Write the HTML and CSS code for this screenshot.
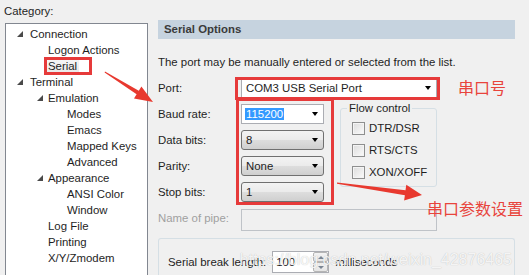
FILE: index.html
```html
<!DOCTYPE html>
<html lang="en">
<head>
  <meta charset="UTF-8" />
  <title>Session Options - Serial</title>
  <link rel="stylesheet" href="styles.css">
</head>
<body>
  <div class="window">
    <div class="sidebar">
      <div class="caption">Category:</div>
      <ul class="tree">
        <li class="lvl0"><span class="tw"><svg width="6" height="6" viewBox="0 0 6 6"><polygon points="6,0 6,6 0,6" /></svg></span>Connection</li>
        <li class="lvl1"><span class="tw"></span>Logon Actions</li>
        <li class="lvl1"><span class="tw"></span><span class="selected">Serial</span></li>
        <li class="lvl0"><span class="tw"><svg width="6" height="6" viewBox="0 0 6 6"><polygon points="6,0 6,6 0,6" /></svg></span>Terminal</li>
        <li class="lvl1"><span class="tw"><svg width="6" height="6" viewBox="0 0 6 6"><polygon points="6,0 6,6 0,6" /></svg></span>Emulation</li>
        <li class="lvl2">Modes</li>
        <li class="lvl2">Emacs</li>
        <li class="lvl2">Mapped Keys</li>
        <li class="lvl2">Advanced</li>
        <li class="lvl1"><span class="tw"><svg width="6" height="6" viewBox="0 0 6 6"><polygon points="6,0 6,6 0,6" /></svg></span>Appearance</li>
        <li class="lvl2">ANSI Color</li>
        <li class="lvl2">Window</li>
        <li class="lvl1"><span class="tw"></span>Log File</li>
        <li class="lvl1"><span class="tw"></span>Printing</li>
        <li class="lvl1"><span class="tw"></span>X/Y/Zmodem</li>
      </ul>
    </div>

    <div class="panel">
      <div class="panel-title">Serial Options</div>
      <p class="hint">The port may be manually entered or selected from the list.</p>

      <div class="form">
        <div class="label">Port:</div>
        <div class="combo edit wide"><span>COM3 USB Serial Port</span><span class="arrow"></span></div>

        <div class="label">Baud rate:</div>
        <div class="combo edit"><span class="hl">115200</span><span class="arrow"></span></div>

        <div class="group flow">
          <span class="legend">Flow control</span>
          <div class="check"><span class="box"></span>DTR/DSR</div>
          <div class="check"><span class="box"></span>RTS/CTS</div>
          <div class="check"><span class="box"></span>XON/XOFF</div>
        </div>

        <div class="label">Data bits:</div>
        <div class="combo"><span>8</span><span class="arrow"></span></div>

        <div class="label">Parity:</div>
        <div class="combo"><span>None</span><span class="arrow"></span></div>

        <div class="label">Stop bits:</div>
        <div class="combo"><span>1</span><span class="arrow"></span></div>

        <div class="label disabled">Name of pipe:</div>
        <div class="textbox disabled wide"></div>
      </div>

      <div class="group break">
        <div class="label">Serial break length:</div>
        <div class="spin">
          <span class="spin-value">100</span>
          <span class="spin-btns">
            <span class="spin-btn"><span class="up"></span></span>
            <span class="spin-btn"><span class="down"></span></span>
          </span>
        </div>
        <div class="label">milliseconds</div>
      </div>
    </div>

    <!-- annotations drawn on top of the dialog -->
    <div class="mark mark-serial"></div>
    <div class="mark mark-port"></div>
    <div class="mark mark-params"></div>
    <svg class="arrows" width="529" height="275" viewBox="0 0 529 275">
      <polygon points="105,71.5 138.8,90.8 141.4,86.6 153,102 134,98.4 136.6,94.2 104.6,72.5" />
      <polygon points="337,182.5 405.5,190.2 406.3,184.8 422,195 404.1,200.6 404.9,195.2 337,183.8" />
    </svg>
    <div class="note note-port">串口号</div>
    <div class="note note-params">串口参数设置</div>
    <div class="watermark">https://blog.csdn.net/weixin_42876465</div>
  </div>
</body>
</html>
```

FILE: styles.css
```css
html, body {
  margin: 0;
  height: 275px;
  overflow: hidden;
}
body {
  background: #f0f0f0;
  font-family: 'Liberation Sans', Arial, sans-serif;
  font-size: 11.4px;
  color: #1e1e1e;
}

.window {
  position: relative;
  display: flex;
  height: 275px;
  overflow: hidden;
}

/* left column */
.sidebar {
  width: 148px;
  flex: none;
}
.caption {
  padding: 5px 0 0 4px;
  height: 18px;
  line-height: 13px;
}
.tree {
  list-style: none;
  margin: 0 0 0 5px;
  padding: 2px 0 0 0;
  height: 250px;
  background: #fff;
  border: 1px solid #828790;
  border-bottom: none;
}
.tree li {
  display: flex;
  align-items: center;
  height: 16px;
  white-space: nowrap;
}
.tree .lvl0 { padding-left: 6px; }
.tree .lvl1 { padding-left: 24px; }
.tree .lvl2 { padding-left: 61px; }
.tw {
  width: 18px;
  flex: none;
  display: flex;
  align-items: center;
  padding-left: 5px;
  box-sizing: border-box;
}
.lvl1 .tw { padding-left: 7px; }
.tw svg { fill: #4a4a4a; }
.selected {
  background: linear-gradient(#f6f6f6, #e8e8e8);
  margin-left: -2px;
  padding: 1px 2px;
  line-height: 13px;
}

/* right column */
.panel {
  margin-left: 10px;
  width: 357px;
  padding-top: 20px;
}
.panel-title {
  height: 19px;
  line-height: 19px;
  background: #c6d3df;
  padding-left: 6px;
  font-weight: bold;
  color: #3a3a3a;
}
.hint {
  margin: 15px 0 0 0;
  line-height: 16px;
}

.form {
  display: grid;
  grid-template-columns: 83px 83px 1fr;
  grid-auto-rows: 20px;
  row-gap: 6px;
  margin-top: 8px;
  width: 279px;
}
.label {
  display: flex;
  align-items: center;
  white-space: nowrap;
}
.form .label { grid-column: 1; }
.label.disabled { color: #a0a0a0; }

.combo {
  display: flex;
  align-items: center;
  padding-left: 4px;
  border: 1px solid #707070;
  border-radius: 3px;
  background: linear-gradient(#f3f3f3 0%, #ebebeb 48%, #dddddd 52%, #cfcfcf 100%);
}
.combo.edit {
  background: #fff;
  border-color: #abadb3;
  border-radius: 0;
}
.form .combo, .form .textbox { grid-column: 2; }
.form .wide { grid-column: 2 / span 2; }
.arrow {
  margin-left: auto;
  margin-right: 5px;
  border-top: 4px solid #000;
  border-left: 3.5px solid transparent;
  border-right: 3.5px solid transparent;
}
.hl {
  background: #3399ff;
  color: #fff;
  padding: 0 1px;
  margin-left: -1px;
}
.textbox {
  border: 1px solid #bfc3c8;
  height: 20px;
  margin-top: 1px;
}

.group {
  position: relative;
  border: 1px solid #d5dfe5;
  border-radius: 3px;
}
.legend {
  position: absolute;
  top: -8px;
  left: 6px;
  padding: 0 2px;
  background: #f0f0f0;
  line-height: 14px;
}
.flow {
  grid-column: 3;
  grid-row: 2 / span 3;
  align-self: start;
  margin: 4px 0 0 16px;
  padding: 8px 0 3px 11px;
}
.check {
  display: flex;
  align-items: center;
  gap: 4px;
  height: 22px;
}
.box {
  width: 11px;
  height: 11px;
  border: 1px solid #8e8f8f;
  background: linear-gradient(135deg, #dcdcdc, #fbfbfb);
  box-shadow: inset 0 0 0 1px #f4f4f4;
}

.break {
  display: flex;
  align-items: flex-start;
  gap: 6px;
  margin-top: 10px;
  height: 60px;
  padding: 12px 0 0 9px;
  border-bottom: none;
}
.break .label { height: 22px; }
.spin {
  display: flex;
  width: 57px;
  height: 22px;
  box-sizing: border-box;
  border: 1px solid #abadb3;
  background: #fff;
}
.spin-value {
  flex: 1;
  padding-left: 3px;
  line-height: 20px;
}
.spin-btns {
  display: flex;
  flex-direction: column;
  width: 15px;
}
.spin-btn {
  flex: 1;
  display: flex;
  align-items: center;
  justify-content: center;
  border: 1px solid #b5b5b5;
  border-radius: 2px;
  background: linear-gradient(#f4f4f4, #e4e4e4);
}
.up, .down {
  border-left: 3px solid transparent;
  border-right: 3px solid transparent;
}
.up { border-bottom: 3px solid #7a8593; }
.down { border-top: 3px solid #7a8593; }

/* annotations */
.mark {
  position: absolute;
  box-sizing: border-box;
  border: 3px solid #e63a3a;
}
.mark-serial { left: 44px; top: 57px; width: 48px; height: 18px; }
.mark-port { left: 235px; top: 77px; width: 205px; height: 23px; }
.mark-params { left: 236px; top: 98px; width: 98px; height: 107px; }
.arrows {
  position: absolute;
  left: 0;
  top: 0;
  fill: #e8392f;
}
.note {
  position: absolute;
  font-family: 'Noto Sans CJK SC', sans-serif;
  font-size: 16px;
  line-height: 20px;
  color: #e8443c;
}
.note-port { left: 458px; top: 77px; }
.note-params { left: 427px; top: 198px; }
.watermark {
  position: absolute;
  right: 17px;
  top: 250px;
  font-family: 'Liberation Sans', Arial, sans-serif;
  font-size: 16px;
  line-height: 20px;
  color: rgba(255, 255, 255, 0.85);
  text-shadow: 0 0 1px rgba(0, 0, 0, 0.25);
  white-space: nowrap;
}
```
